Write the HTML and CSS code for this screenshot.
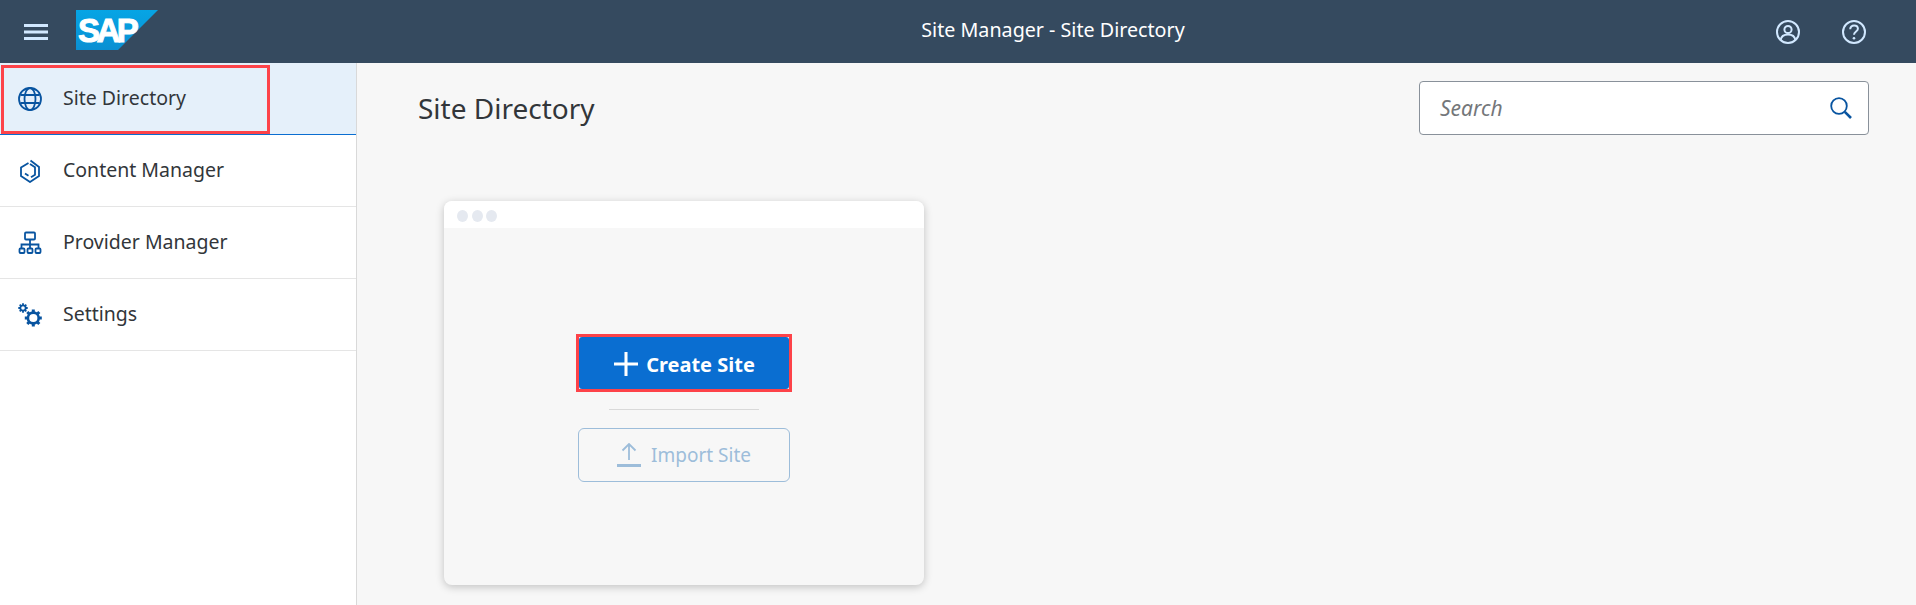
FILE: index.html
```html
<!DOCTYPE html>
<html lang="en">
<head>
<meta charset="utf-8">
<title>Site Manager - Site Directory</title>
<link rel="stylesheet" href="styles.css">
</head>
<body>
<header class="shell">
  <div class="shell-left">
    <svg class="menu-icon" viewBox="0 0 24 16"><path d="M0 1.500h24M0 8h24M0 14.500h24"/></svg>
    <div class="logo">
      <svg class="logo-mark" viewBox="0 0 82 40"><defs><linearGradient id="sapg" x1="0" y1="0" x2="0" y2="1"><stop offset="0" stop-color="#06a5e5"/><stop offset="1" stop-color="#0a8fd2"/></linearGradient></defs><polygon points="0,0 82,0 42,40 0,40" fill="url(#sapg)"/></svg>
      <span class="logo-text">SAP</span>
    </div>
  </div>
  <div class="shell-title">Site Manager - Site Directory</div>
  <div class="shell-right">
    <svg class="shell-icon" viewBox="0 0 24 24"><circle cx="12" cy="12" r="11"/><circle cx="12" cy="9.500" r="3.600"/><path d="M4.600 20c.6-3.800 3.400-5.600 7.400-5.600s6.800 1.800 7.400 5.600"/></svg>
    <svg class="shell-icon" viewBox="0 0 24 24"><circle cx="12" cy="12" r="11"/><path d="M8.200 9.200c0-2.400 1.700-3.800 3.900-3.800s3.800 1.400 3.800 3.400c0 2.800-3.900 2.800-3.900 6"/><circle class="dot" cx="12" cy="18.300" r="1.300"/></svg>
  </div>
</header>
<div class="layout">
  <nav class="sidebar">
    <a class="nav-item selected">
      <svg class="nav-icon" viewBox="0 0 24 24"><circle cx="12" cy="12" r="11"/><ellipse cx="12" cy="12" rx="5.500" ry="11"/><path d="M2.400 8h19.200M2.400 16h19.200"/></svg>
      <span class="nav-label">Site Directory</span>
      <i class="callout"></i>
    </a>
    <a class="nav-item">
      <svg class="nav-icon" viewBox="0 0 24 24"><path d="M10.500 4 3 8.500V17l9 6 9-6V8L12.500 1.500"/><path d="M12 5l5 3.200v7.500l-4 2.500M7 14.500l3.500 2.200"/></svg>
      <span class="nav-label">Content Manager</span>
    </a>
    <a class="nav-item">
      <svg class="nav-icon" viewBox="0 0 24 24"><rect x="7" y="1.500" width="10" height="7" rx="1"/><path d="M12 8.500v5M3.500 17.500v-4h17v4M12 13.500v4"/><rect x="1.500" y="17.500" width="5" height="4.500" rx="1"/><rect x="9.500" y="17.500" width="5" height="4.500" rx="1"/><rect x="17.500" y="17.500" width="5" height="4.500" rx="1"/></svg>
      <span class="nav-label">Provider Manager</span>
    </a>
    <a class="nav-item">
      <svg class="nav-icon" viewBox="0 0 24 24"><circle cx="5" cy="5" r="2.700" stroke-width="1.800"/><path stroke-width="1.800" d="M5 .3v1.800M5 7.900v1.800M.3 5h1.800M7.900 5h1.800M1.700 1.700l1.200 1.200M7.100 7.100l1.200 1.200M8.300 1.700 7.100 2.900M2.900 7.100 1.700 8.300"/><circle cx="15.300" cy="15" r="5.400" stroke-width="2.600"/><path stroke-width="3" d="M15.300 6.500v2.800M15.300 20.700v2.800M6.800 15h2.800M21 15h2.800M9.300 9l2 2M19.300 19l2 2M21.300 9l-2 2M11.300 19l-2 2"/></svg>
      <span class="nav-label">Settings</span>
    </a>
  </nav>
  <main class="content">
    <div class="page-head">
      <h1 class="page-title">Site Directory</h1>
      <div class="search">
        <span class="search-text">Search</span>
        <svg class="search-icon" viewBox="0 0 22 22"><circle cx="9" cy="9" r="7.800"/><path class="handle" d="M14.800 14.800 21 21"/></svg>
      </div>
    </div>
    <section class="site-card">
      <div class="card-bar"><i></i><i></i><i></i></div>
      <div class="card-body">
        <button class="btn-create">
          <svg class="btn-plus" viewBox="0 0 22 22"><path d="M11 0v22M0 11h22"/></svg>
          <span>Create Site</span>
          <i class="callout-btn"></i>
        </button>
        <div class="card-rule"></div>
        <button class="btn-import">
          <svg class="btn-upload" viewBox="0 0 24 24"><path d="M12 1v16M5.500 7.500 12 1l6.500 6.500"/><path class="base" d="M0 22.500h24"/></svg>
          <span>Import Site</span>
        </button>
      </div>
    </section>
  </main>
</div>
</body>
</html>
```
FILE: styles.css
```css
* { box-sizing: border-box; }
html, body { margin: 0; height: 100%; overflow: hidden; }
body {
  display: flex;
  flex-direction: column;
  background: #f7f7f7;
  color: #32363a;
  font-family: "Noto Sans", "Open Sans", sans-serif;
}

/* Shell bar */
.shell {
  flex: 0 0 63px;
  display: flex;
  align-items: center;
  background: #354a5f;
  color: #fff;
}
.shell-left {
  flex: 0 0 158px;
  display: flex;
  align-items: center;
  gap: 28px;
  padding-left: 24px;
  height: 100%;
}
.menu-icon {
  width: 24px;
  height: 16px;
  fill: none;
  stroke: #d1e8ff;
  stroke-width: 3;
}
.logo {
  position: relative;
  width: 82px;
  height: 40px;
  margin-top: -3px;
}
.logo-mark { display: block; width: 82px; height: 40px; }
.logo-text {
  position: absolute;
  left: 2px;
  top: 2px;
  font: bold 33px/38px "Liberation Sans", sans-serif;
  letter-spacing: -3.500px;
  color: #fff;
  -webkit-text-stroke: 1px #fff;
}
.shell-title {
  flex: 1;
  padding: 0 0 5px 188px;
  text-align: center;
  font-size: 19.700px;
}
.shell-right {
  flex: 0 0 156px;
  display: flex;
  gap: 42px;
  padding-left: 16px;
}
.shell-icon {
  width: 24px;
  height: 24px;
  fill: none;
  stroke: #d1e8ff;
  stroke-width: 2;
}
.shell-icon .dot { fill: #d1e8ff; stroke: none; }

/* Layout */
.layout { flex: 1; display: flex; min-height: 0; }
.sidebar {
  flex: 0 0 357px;
  background: #fff;
  border-right: 1px solid #d9d9d9;
}
.nav-item {
  position: relative;
  display: flex;
  align-items: center;
  gap: 22px;
  height: 72px;
  padding-left: 18px;
  border-bottom: 1px solid #e5e5e5;
  font-size: 19.500px;
  color: #32363a;
}
.nav-item.selected {
  background: #e5f0fa;
  border-bottom-color: #0a6ed1;
}
.nav-label { margin: 0 0 2px -1px; }
.nav-icon {
  flex: 0 0 24px;
  width: 24px;
  height: 24px;
  fill: none;
  stroke: #0854a0;
  stroke-width: 1.800;
}
.callout {
  position: absolute;
  left: 1px;
  top: 2px;
  width: 269px;
  height: 69px;
  border: 3px solid #fd4349;
}

/* Content */
.content { flex: 1; min-width: 0; padding: 18px 47px 0 61px; }
.page-head {
  display: flex;
  align-items: center;
  justify-content: space-between;
  height: 54px;
}
.page-title {
  margin: 0;
  font-size: 28px;
  font-weight: 400;
  color: #32363a;
}
.search {
  flex: 0 0 450px;
  height: 54px;
  display: flex;
  align-items: center;
  justify-content: space-between;
  padding: 0 16px 0 20px;
  background: #fff;
  border: 1px solid #89919a;
  border-radius: 4px;
}
.search-text { font-size: 21px; font-style: italic; color: #74777a; }
.search-icon {
  width: 22px;
  height: 22px;
  fill: none;
  stroke: #0854a0;
  stroke-width: 1.800;
}
.search-icon .handle { stroke-width: 2.600; }

/* Card */
.site-card {
  width: 480px;
  height: 384px;
  margin: 66px 0 0 26px;
  border-radius: 8px;
  background: #f7f7f7;
  box-shadow: 0 2px 8px rgba(0, 0, 0, .22);
}
.card-bar {
  display: flex;
  align-items: center;
  gap: 3.500px;
  height: 27px;
  padding: 3px 0 0 13px;
  background: #fff;
  border-radius: 8px 8px 0 0;
}
.card-bar i {
  width: 11px;
  height: 12px;
  border-radius: 50%;
  background: #e5e9f0;
}
.card-body {
  display: flex;
  flex-direction: column;
  align-items: center;
  padding-top: 109px;
}
.btn-create, .btn-import {
  display: flex;
  align-items: center;
  justify-content: center;
  font-family: inherit;
}
.btn-create {
  position: relative;
  width: 210px;
  height: 52px;
  gap: 8px;
  padding: 2px 0 0 2px;
  margin-left: -1px;
  background: #0a6ed1;
  border: 0;
  border-radius: 3px;
  color: #fff;
  font-size: 20px;
  font-weight: 700;
}
.callout-btn {
  position: absolute;
  inset: -3px;
  border: 3px solid #fd4349;
}
.btn-plus {
  width: 24px;
  height: 24px;
  fill: none;
  stroke: #fff;
  stroke-width: 2.800;
}
.card-rule {
  width: 150px;
  height: 1px;
  margin: 20px 0 18px;
  background: #d9d9d9;
}
.btn-import {
  width: 212px;
  height: 54px;
  gap: 10px;
  background: transparent;
  border: 1px solid #9dbdda;
  border-radius: 6px;
  color: #9dbdda;
  font-size: 19px;
}
.btn-upload {
  width: 24px;
  height: 24px;
  fill: none;
  stroke: #9dbdda;
  stroke-width: 1.800;
}
.btn-upload .base { stroke-width: 3; }
```
